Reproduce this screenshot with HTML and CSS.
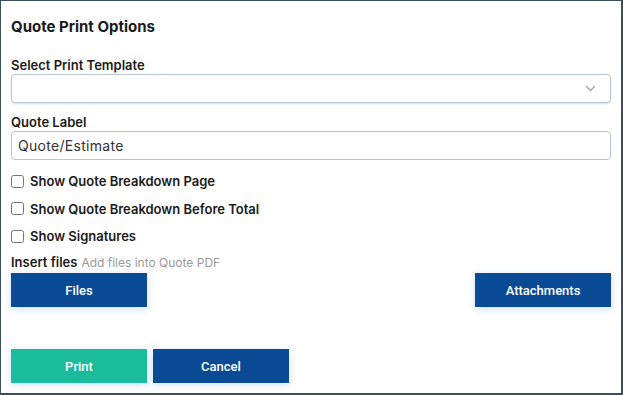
FILE: index.html
```html
<!DOCTYPE html>
<html lang="en">
  <head>
    <meta charset="UTF-8" />
    <meta name="viewport" content="width=device-width, initial-scale=1.0" />
    <title>Quote Print Options</title>
    <link rel="stylesheet" href="styles.css">
  </head>
  <body>
    <div class="dialog">
      <h1 class="title">Quote Print Options</h1>

      <label class="field-label">Select Print Template</label>
      <div class="select">
        <svg class="chevron" width="11" height="7" viewBox="0 0 11 7">
          <path d="M1 1 L5.5 5.5 L10 1" fill="none" stroke="#9aa3ad" stroke-width="1.3" />
        </svg>
      </div>

      <label class="field-label field-label-2">Quote Label</label>
      <input class="text-input" type="text" value="Quote/Estimate" />

      <div class="checks">
        <label class="check"><input type="checkbox" /> Show Quote Breakdown Page</label>
        <label class="check"><input type="checkbox" /> Show Quote Breakdown Before Total</label>
        <label class="check"><input type="checkbox" /> Show Signatures</label>
      </div>

      <div class="insert">
        <span class="insert-title">Insert files</span>
        <span class="insert-hint">Add files into Quote PDF</span>
      </div>
      <div class="file-row">
        <button class="btn btn-blue">Files</button>
        <button class="btn btn-blue">Attachments</button>
      </div>

      <div class="actions">
        <button class="btn btn-teal">Print</button>
        <button class="btn btn-blue">Cancel</button>
      </div>
    </div>
  </body>
</html>
```

FILE: styles.css
```css
* {
  margin: 0;
  padding: 0;
  box-sizing: border-box;
}
html,
body {
  width: 100%;
  height: 100%;
  overflow: hidden;
  background-color: #3b4f5c;
}
.dialog {
  height: 100%;
  background-color: #fff;
  border-style: solid;
  border-color: #3b4f5c;
  border-width: 1px 2px 2px 1px;
  padding: 16px 10px 0 10px;
  font-family: 'Inter', 'Open Sans', sans-serif;
  color: #1a1a1a;
}
.title {
  font-size: 15px;
  line-height: 20px;
  font-weight: 700;
}
.field-label {
  display: block;
  margin-top: 19px;
  font-size: 13px;
  line-height: 18px;
  font-weight: 600;
}
.field-label-2 {
  margin-top: 10px;
}
.select {
  height: 29px;
  border: 1px solid #b7c6d2;
  border-radius: 4px;
  box-shadow: 0 1px 2px rgba(40, 60, 80, 0.18);
  display: flex;
  align-items: center;
  justify-content: flex-end;
  padding-right: 14px;
}
.text-input {
  display: block;
  width: 100%;
  height: 29px;
  border: 1px solid #b7c6d2;
  border-radius: 4px;
  padding: 0 6px;
  font-family: 'Inter', 'Open Sans', sans-serif;
  font-size: 14px;
  letter-spacing: 0.3px;
  color: #333;
  outline: none;
}
.checks {
  margin-top: 13px;
  display: flex;
  flex-direction: column;
  gap: 11.5px;
}
.check {
  display: flex;
  align-items: center;
  gap: 6px;
  height: 16px;
  font-size: 13px;
  font-weight: 600;
}
.check input {
  width: 13px;
  height: 13px;
  margin: 0;
}
.insert {
  margin-top: 10px;
  height: 16px;
  display: flex;
  align-items: baseline;
  gap: 4px;
  line-height: 16px;
}
.insert-title {
  font-size: 13px;
  font-weight: 600;
}
.insert-hint {
  font-size: 12px;
  color: #9a9a9a;
}
.file-row {
  margin-top: 3px;
  display: flex;
  justify-content: space-between;
}
.btn {
  width: 136px;
  height: 34px;
  border: none;
  color: #fff;
  font-family: 'Roboto', sans-serif;
  font-size: 13px;
  font-weight: 500;
  box-shadow: 0 2px 8px rgba(60, 140, 230, 0.25);
}
.btn-blue {
  background-color: #0a4a95;
}
.btn-teal {
  background-color: #1bbc9b;
}
.actions {
  margin-top: 42px;
  display: flex;
  gap: 6px;
}
```
